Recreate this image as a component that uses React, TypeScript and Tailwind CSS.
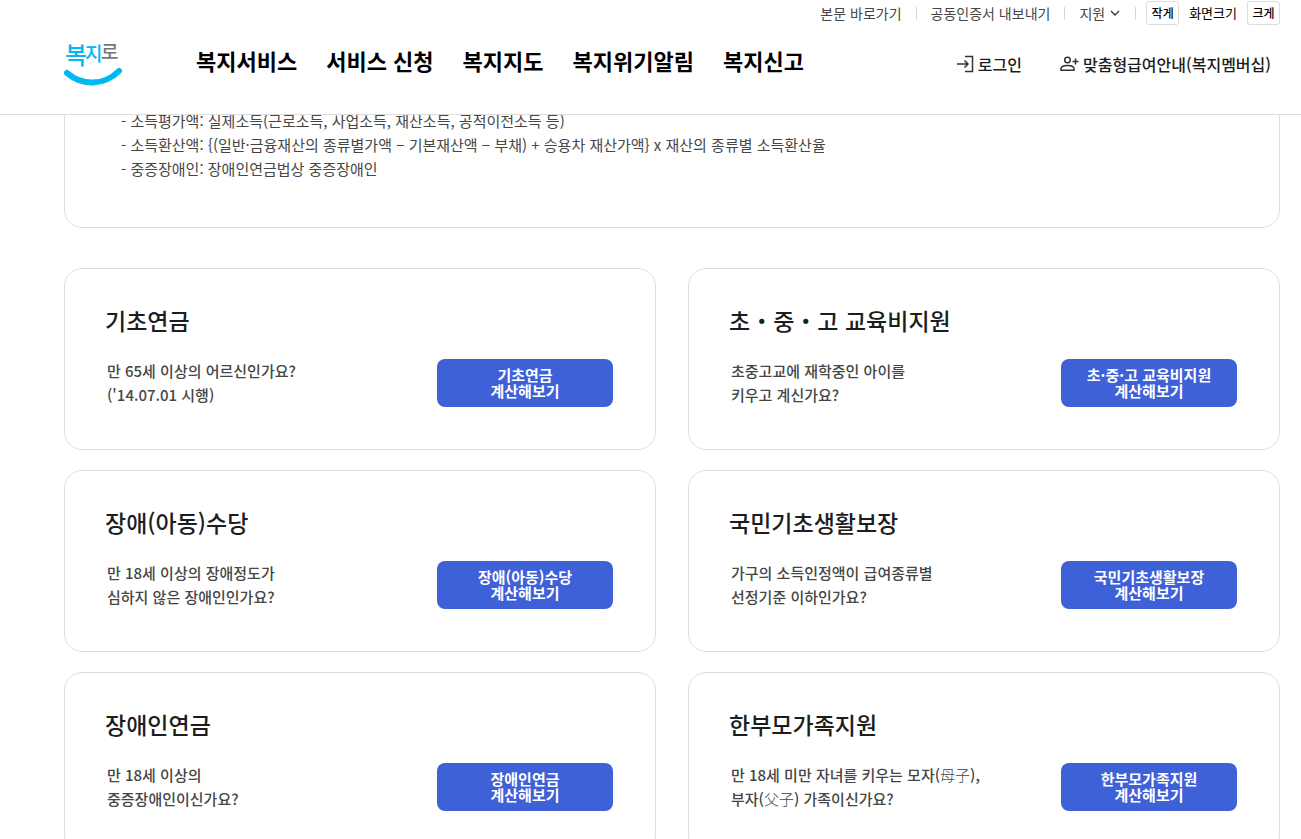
type Program = {
  title: string
  desc: React.ReactNode[]
  button: string
}

// Hanja is set lighter than the Hangul around it
const Hanja = ({ children }: { children: string }) => <span className="font-light">{children}</span>

const programs: Program[] = [
  { title: "기초연금", desc: ["만 65세 이상의 어르신인가요?", "('14.07.01 시행)"], button: "기초연금" },
  { title: "초・중・고 교육비지원", desc: ["초중고교에 재학중인 아이를", "키우고 계신가요?"], button: "초·중·고 교육비지원" },
  { title: "장애(아동)수당", desc: ["만 18세 이상의 장애정도가", "심하지 않은 장애인인가요?"], button: "장애(아동)수당" },
  { title: "국민기초생활보장", desc: ["가구의 소득인정액이 급여종류별", "선정기준 이하인가요?"], button: "국민기초생활보장" },
  { title: "장애인연금", desc: ["만 18세 이상의", "중증장애인이신가요?"], button: "장애인연금" },
  {
    title: "한부모가족지원",
    desc: [
      <>만 18세 미만 자녀를 키우는 모자(<Hanja>母子</Hanja>),</>,
      <>부자(<Hanja>父子</Hanja>) 가족이신가요?</>,
    ],
    button: "한부모가족지원",
  },
]

const menus = ["복지서비스", "서비스 신청", "복지지도", "복지위기알림", "복지신고"]

const notes = [
  "- 소득평가액: 실제소득(근로소득, 사업소득, 재산소득, 공적이전소득 등)",
  "- 소득환산액: {(일반·금융재산의 종류별가액 − 기본재산액 − 부채) + 승용차 재산가액} x 재산의 종류별 소득환산율",
  "- 중증장애인: 장애인연금법상 중증장애인",
]

function Logo() {
  return (
    <svg viewBox="0 0 60 52" className="h-[52px] w-[60px] overflow-visible" role="img" aria-label="복지로">
      <g fontWeight="500">
        <text x="1" y="29" fontSize="24" fill="#00b9f2">복</text>
        <text x="21" y="26" fontSize="19" fill="#00b9f2">지</text>
        <text x="37" y="24" fontSize="19" fill="#77787b">로</text>
      </g>
      <path d="M3 38C18 51 40 51 55 36" fill="none" stroke="#00b9f2" strokeWidth="6" strokeLinecap="round" />
    </svg>
  )
}

function Divider() {
  return <span className="h-[13px] w-px bg-[#d5d5d5]" />
}

function Header() {
  return (
    <header className="sticky top-0 z-10 h-[115px] border-b border-[#dddddd] bg-white pr-[21px] pl-16">
      <div className="flex h-[26px] items-center justify-end text-sm text-[#464646]">
        <a href="#content">본문 바로가기</a>
        <span className="flex px-[14px]"><Divider /></span>
        <a href="#cert">공동인증서 내보내기</a>
        <span className="flex px-[14px]"><Divider /></span>
        <button type="button" className="flex items-center gap-1">
          지원
          <svg viewBox="0 0 12 12" className="size-3" fill="none" stroke="#333" strokeWidth="1.3">
            <path d="M2 4l4 4 4-4" />
          </svg>
        </button>
        <span className="flex pr-2.5 pl-[14px]"><Divider /></span>
        <button type="button" className="h-6 w-[33px] rounded-[3px] border border-[#dddddd] text-xs font-medium text-black">작게</button>
        <span className="px-2.5 text-[13px] text-black">화면크기</span>
        <button type="button" className="h-6 w-[33px] rounded-[3px] border border-[#dddddd] text-xs font-medium text-black">크게</button>
      </div>

      <div className="flex items-center justify-between pt-[7px]">
        <div className="flex items-center">
          <a href="#home" className="mt-0.5 mr-[72px]"><Logo /></a>
          <nav className="flex gap-[29px] text-[22px] leading-8 font-bold text-black">
            {menus.map((menu) => (
              <a key={menu} href="#menu">{menu}</a>
            ))}
          </nav>
        </div>
        <div className="flex gap-[38px] pt-2 pr-[9px] font-medium text-[#1d1d1d]">
          <a href="#login" className="flex items-center gap-1">
            <svg viewBox="0 0 18 18" className="size-[18px]" fill="none" stroke="#333" strokeWidth="1.5">
              <path d="M9 1.500h7.500v15H9M1 9h11M8.500 5.500L12 9l-3.500 3.500" />
            </svg>
            로그인
          </a>
          <a href="#membership" className="flex items-center gap-1">
            <svg viewBox="0 0 19 18" className="h-[18px] w-[19px]" fill="none" stroke="#333" strokeWidth="1.5">
              <circle cx="7.500" cy="5" r="2.800" />
              <path d="M1 15.300v-1.500c0-2 3-3.300 6.500-3.300s6.500 1.300 6.500 3.300v1.500zM15.500 3.500v6M12.500 6.500h6" />
            </svg>
            맞춤형급여안내(복지멤버십)
          </a>
        </div>
      </div>
    </header>
  )
}

function ProgramCard({ title, desc, button }: Program) {
  return (
    <article className="rounded-[18px] border border-[#dddddd] pt-9 pr-[42px] pb-[42px] pl-10">
      <h2 className="text-[23px] leading-[30px] font-medium text-[#1d1d1d]">{title}</h2>
      <div className="mt-6 flex items-start justify-between">
        <p className="pl-0.5 text-[15px] leading-6 font-medium text-[#464646]">
          {desc[0]}
          <br />
          {desc[1]}
        </p>
        <button type="button" className="h-12 w-44 shrink-0 rounded-lg bg-[#3e61d7] text-[15px] leading-4 font-bold text-white">
          {button}
          <br />
          계산해보기
        </button>
      </div>
    </article>
  )
}

export default function App() {
  return (
    <div lang="ko" className="min-h-screen bg-white font-['Noto_Sans_CJK_KR',sans-serif]">
      <Header />
      <main id="content" className="-mt-6 pr-[21px] pb-10 pl-16">
        <section className="rounded-[18px] border border-[#dddddd] px-14 pt-[17px] pb-[46px]">
          <ul className="text-[15px] leading-6 text-[#464646]">
            {notes.map((note) => (
              <li key={note}>{note}</li>
            ))}
          </ul>
        </section>
        <div className="mt-10 grid grid-cols-2 gap-x-8 gap-y-5">
          {programs.map((program) => (
            <ProgramCard key={program.title} {...program} />
          ))}
        </div>
      </main>
    </div>
  )
}
